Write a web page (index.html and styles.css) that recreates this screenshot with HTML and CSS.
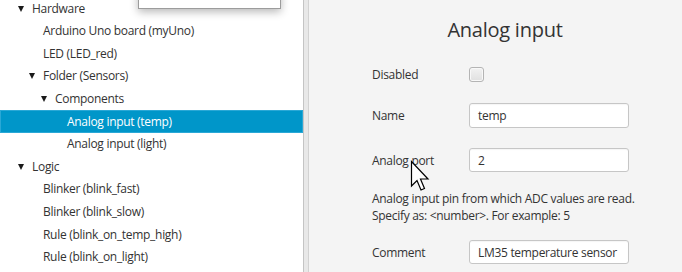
FILE: index.html
```html
<!DOCTYPE html>
<html>
<head>
<meta charset="utf-8">
<link rel="stylesheet" href="styles.css">
</head>
<body>
<div class="app">
  <div class="tree">
    <div class="rows">
      <div class="row lvl1"><span class="arrow"></span><span class="label">Hardware</span></div>
      <div class="row lvl2"><span class="noarrow"></span><span class="label">Arduino Uno board (myUno)</span></div>
      <div class="row lvl2"><span class="noarrow"></span><span class="label">LED (LED_red)</span></div>
      <div class="row lvl2"><span class="arrow"></span><span class="label">Folder (Sensors)</span></div>
      <div class="row lvl3"><span class="arrow"></span><span class="label">Components</span></div>
      <div class="row lvl4 selected"><span class="noarrow"></span><span class="label">Analog input (temp)</span></div>
      <div class="row lvl4"><span class="noarrow"></span><span class="label">Analog input (light)</span></div>
      <div class="row lvl1"><span class="arrow"></span><span class="label">Logic</span></div>
      <div class="row lvl2"><span class="noarrow"></span><span class="label">Blinker (blink_fast)</span></div>
      <div class="row lvl2"><span class="noarrow"></span><span class="label">Blinker (blink_slow)</span></div>
      <div class="row lvl2"><span class="noarrow"></span><span class="label">Rule (blink_on_temp_high)</span></div>
      <div class="row lvl2"><span class="noarrow"></span><span class="label">Rule (blink_on_light)</span></div>
    </div>
  </div>
  <div class="splitter"></div>
  <div class="editor">
    <div class="content">
      <div class="title">Analog input</div>
      <div class="field-row first">
        <span class="flabel">Disabled</span>
        <span class="checkbox"></span>
      </div>
      <div class="field-row name-row">
        <span class="flabel">Name</span>
        <span class="input">temp</span>
      </div>
      <div class="field-row port-row">
        <span class="flabel">Analog port</span>
        <span class="input">2</span>
      </div>
      <div class="help">Analog input pin from which ADC values are read.<br>Specify as: &lt;number&gt;. For example: 5</div>
      <div class="field-row comment-row">
        <span class="flabel">Comment</span>
        <span class="input">LM35 temperature sensor</span>
      </div>
    </div>
  </div>
  <div class="popup"></div>
  <svg class="cursor" width="20" height="32" viewBox="0 0 20 32">
    <path d="M1.5 1.5 L1.5 26 L7 20.5 L11 30 L14.5 28.5 L10.5 19 L18 19 Z" fill="#fff" stroke="#000" stroke-width="1.2" stroke-linejoin="miter"/>
  </svg>
</div>
</body>
</html>
```
FILE: styles.css
```css
html, body {
  margin: 0;
  padding: 0;
}
body {
  width: 682px;
  height: 272px;
  overflow: hidden;
  font-family: "Open Sans", "Noto Sans", sans-serif;
  font-size: 12px;
  letter-spacing: -0.3px;
  color: #333;
}
.app {
  position: relative;
  display: flex;
  width: 682px;
  height: 272px;
  overflow: hidden;
}
.tree {
  width: 303px;
  flex: none;
  background: #fff;
  border-right: 1px solid #c4c4c4;
  overflow: hidden;
}
.rows {
  margin-top: -2.6px;
}
.row {
  height: 22.6px;
  display: flex;
  align-items: center;
  white-space: nowrap;
}
.lvl1 { padding-left: 15px; }
.lvl2 { padding-left: 26px; }
.lvl3 { padding-left: 38px; }
.lvl4 { padding-left: 50px; }
.arrow, .noarrow {
  width: 17px;
  flex: none;
  display: flex;
  align-items: center;
}
.arrow::before {
  content: "";
  margin-left: 3px;
  border-left: 3.5px solid transparent;
  border-right: 3.5px solid transparent;
  border-top: 6px solid #1a1a1a;
}
.label {
  line-height: 16px;
}
.selected {
  background: #0096c9;
  color: #fff;
  box-shadow: inset 0 0 0 1px #2aa8d6;
}
.splitter {
  width: 4px;
  flex: none;
  background: #e8e8e8;
  border-right: 1px solid #d2d2d2;
}
.editor {
  flex: 1;
  background: #f4f4f4;
}
.content {
  width: 266px;
  margin-left: 63px;
}
.title {
  margin-top: 16px;
  font-size: 20px;
  line-height: 28px;
  letter-spacing: -0.25px;
  text-align: center;
  color: #333;
}
.field-row {
  display: grid;
  grid-template-columns: 97px 160px;
  align-items: center;
  height: 25px;
}
.first { margin-top: 18px; }
.name-row { margin-top: 16px; }
.port-row { margin-top: 20px; height: 24px; }
.comment-row { margin-top: 16px; height: 24px; }
.flabel {
  white-space: nowrap;
}
.checkbox {
  width: 13px;
  height: 13px;
  border: 1px solid #b4b4b4;
  border-radius: 3px;
  background: linear-gradient(#f2f2f2, #e0e0e0);
  box-shadow: inset 0 0 0 1px #f8f8f8;
}
.input {
  box-sizing: border-box;
  height: 100%;
  width: 160px;
  background: #fff;
  border: 1px solid #c6c6c6;
  border-radius: 3px;
  padding-left: 8px;
  display: flex;
  align-items: center;
  white-space: nowrap;
  box-shadow: inset 0 1px 1px rgba(0,0,0,0.04);
}
.help {
  margin-top: 18px;
  line-height: 17px;
  white-space: nowrap;
}
.popup {
  position: absolute;
  left: 138px;
  top: -10px;
  width: 141px;
  height: 17px;
  background: #fff;
  border: 1px solid #9c9c9c;
  box-shadow: 0 3px 8px rgba(0,0,0,0.28);
}
.cursor {
  position: absolute;
  left: 409.5px;
  top: 159.5px;
}
```
